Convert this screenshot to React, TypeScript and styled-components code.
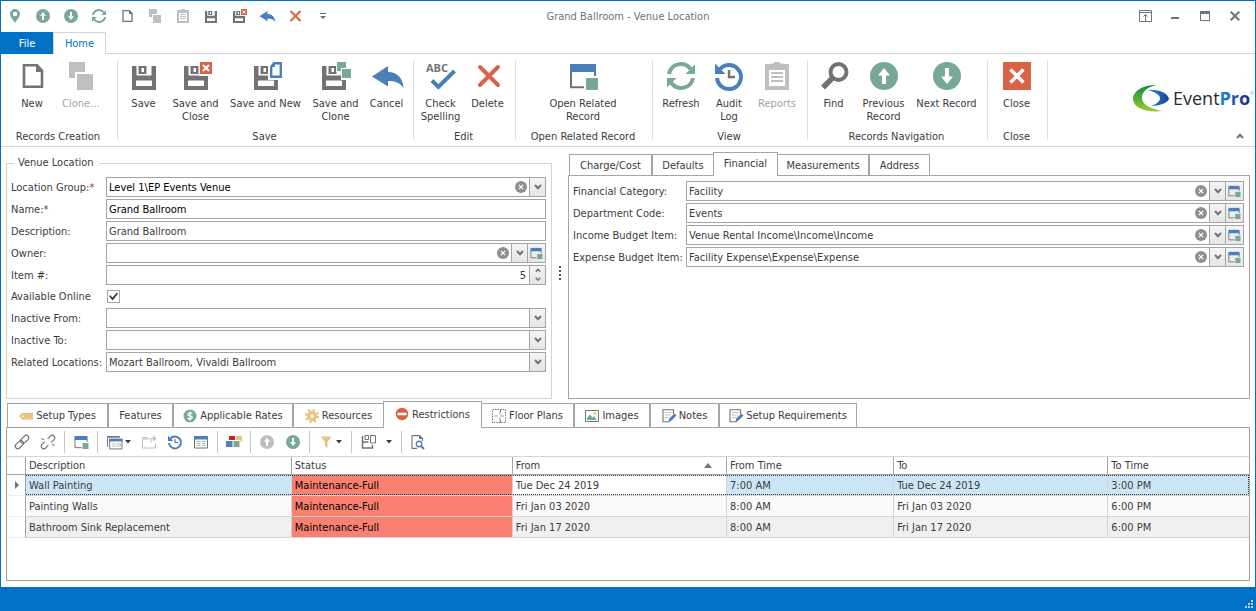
import React, { useRef, useState } from "react";
import styled, { createGlobalStyle, css } from "styled-components";

const c = {
  accent: "#0072c6",
  text: "#3c3c3c",
  grey: "#737373",
  light: "#bfbfbf",
  green: "#78a896",
  blue: "#4a80ba",
  red: "#d96344",
  sand: "#eac282",
  edge: "#a5a5a5",
  line: "#d4d4d4",
};

const GlobalStyle = createGlobalStyle`
  * { box-sizing: border-box; }
  body { margin: 0; background: #fff; }
  body, button, input, select {
    font-family: Tahoma, "DejaVu Sans Condensed", "DejaVu Sans", sans-serif;
    font-size: 11px;
    line-height: 13px;
    color: ${c.text};
  }
  button { background: none; border: 0; padding: 0; margin: 0; }
  svg { display: block; overflow: visible; flex: none; }
`;

/* ---------- icons, drawn on a 28 unit grid ---------- */

type IconProps = { size?: number; children?: React.ReactNode };
const Icon = ({ size = 28, children }: IconProps) => (
  <svg width={size} height={size} viewBox="0 0 28 28" fill="none" aria-hidden="true">
    {children}
  </svg>
);

const Floppy = ({ x = 2 }: { x?: number }) => (
  <g transform={`translate(${x} 0)`} fill={c.grey} fillRule="evenodd">
    <path d="M0 4h4.500v9.500h15V4H24v24H0zM4 18.500v5.500h16v-5.500z" />
    <path d="M6.500 4h8v8h-8zM9.500 6v4h2.500V6z" />
  </g>
);

const Page = () => (
  <g>
    <path d="M6 3.300h13l5 5.500v16H6z" stroke={c.grey} strokeWidth="2.600" />
    <path d="M18 2l7.300 8H18z" fill={c.grey} />
  </g>
);
const Clone = () => (
  <g fill={c.light}>
    <path d="M2 0h16v10H8v6H2z" />
    <path d="M10 12h16v16H10z" />
  </g>
);
const SaveClose = () => (
  <g>
    <Floppy />
    <path d="M17 -1h14v15H17z" fill="#fff" />
    <path d="M18 0h12v12H18z" fill={c.red} />
    <path d="M21 3l6 6M27 3l-6 6" stroke="#fff" strokeWidth="2" />
  </g>
);
const SaveNew = () => (
  <g>
    <Floppy />
    <path d="M16 -1h15v19H16z" fill="#fff" />
    <path d="M22 1.200h6.800v13.600h-9.600V5z" stroke={c.blue} strokeWidth="2.400" />
    <path d="M18 5l5-5v5z" fill={c.blue} />
  </g>
);
const SaveClone = () => (
  <g>
    <Floppy x={0} />
    <path d="M14 -1h11v7h5v12H19v-8h-5z" fill="#fff" />
    <path d="M15 0h9v6h-5v3h-4zM20 7h9v9h-9z" fill={c.green} />
  </g>
);
const Undo = () => (
  <path d="M-1 14.500L15 4v6c9 0 15 6 15.500 16C26.500 20.500 22 19 15 19v5.500z" fill={c.blue} />
);
const Check = () => (
  <g>
    <text x="-1" y="10" fontSize="11" fontWeight="700" fill={c.grey} fontFamily="Open Sans, sans-serif">
      ABC
    </text>
    <path d="M5 18.500l6.300 6.500L27.500 9" stroke={c.blue} strokeWidth="4" />
  </g>
);
const Cross = () => <path d="M6 5l18 18M24 5L6 23" stroke={c.red} strokeWidth="4" strokeLinecap="round" />;
const Related = () => (
  <g>
    <path d="M2 8v17.300h13M26 8v6" stroke={c.grey} strokeWidth="2" />
    <path d="M1 2h26v8H1z" fill={c.blue} />
    <path d="M17 16h12v12H17z" fill={c.green} />
  </g>
);
const Refresh = () => (
  <g>
    <path d="M2 12A12 12 0 0 1 23.500 7M26 16A12 12 0 0 1 4.500 21" stroke={c.green} strokeWidth="4" />
    <path d="M28 2.500V12h-9.500zM0 25.500V16h9.500z" fill={c.green} />
  </g>
);
const History = () => (
  <g>
    <path d="M5 7A12 12 0 1 1 2 16" stroke={c.blue} strokeWidth="4" />
    <path d="M0 1.500V12h10.500z" fill={c.blue} />
    <path d="M14 8v7h6" stroke={c.grey} strokeWidth="2.400" />
  </g>
);
const Clipboard = () => (
  <g>
    <path d="M2 2h6v4h12V2h6v26H2zM6 8v16h16V8z" fill={c.light} fillRule="evenodd" />
    <path d="M8 1.500h3V0h6v1.500h3V6H8z" fill={c.light} />
    <path d="M8 11h12M8 15h12M8 19h12" stroke={c.light} strokeWidth="2" />
  </g>
);
const Find = () => (
  <g stroke={c.grey}>
    <circle cx="18.500" cy="10" r="8" strokeWidth="4" />
    <path d="M12 16.500L3 25.500" strokeWidth="5.500" />
  </g>
);
const Arrow = ({ down, off }: { down?: boolean; off?: boolean }) => (
  <g transform={down ? "rotate(180 14 14)" : undefined}>
    <circle cx="14" cy="14" r="14" fill={off ? c.light : c.green} />
    <path d="M14 6l6 7.500h-4V22h-4v-8.500H8z" fill="#fff" />
  </g>
);
const CloseBox = () => (
  <g>
    <path d="M0 0h28v28H0z" fill={c.red} />
    <path d="M7.500 7.500l13 13M20.500 7.500l-13 13" stroke="#fff" strokeWidth="3.600" />
  </g>
);
const Pin = () => (
  <path
    d="M14 0a10 10 0 0 1 10 10c0 6-6 11-10 18C10 21 4 16 4 10A10 10 0 0 1 14 0zM14 5.500a4.500 4.500 0 1 0 0 9 4.500 4.500 0 0 0 0-9z"
    fill={c.green}
    fillRule="evenodd"
  />
);
const LinkIcon = ({ broken }: { broken?: boolean }) => (
  <g stroke={c.grey} strokeWidth="2.200" transform="rotate(-45 14 14)">
    {broken ? (
      <g>
        <path d="M10 9H2a5 5 0 0 0 0 10h8M18 9h8a5 5 0 0 1 0 10h-8" />
        <path d="M12 5L9 0M19 28l-3-5" />
      </g>
    ) : (
      <g>
        <rect x="-3" y="9" width="19" height="10" rx="5" />
        <rect x="12" y="9" width="19" height="10" rx="5" />
      </g>
    )}
  </g>
);
const Windows = () => (
  <g>
    <path d="M1 22V3h22" stroke={c.grey} strokeWidth="1.800" />
    <path d="M1 2h23v3H1z" fill={c.grey} />
    <path d="M5 8h23v18H5z" fill="#fff" stroke={c.grey} strokeWidth="1.800" />
    <path d="M4 7h25v5H4z" fill={c.blue} />
    <path d="M9 17h8M9 21h8M20 16h5v5h-5z" stroke={c.light} strokeWidth="1.800" />
  </g>
);
const Export = () => (
  <g stroke={c.light} strokeWidth="2">
    <path d="M1 8h14M27 17v9H1V5h9l2 3" />
    <path d="M18 15V7h7" />
    <path d="M22 1l7 6-7 6z" fill={c.light} stroke="none" />
  </g>
);
const FormIcon = () => (
  <g>
    <path d="M1 4h26v22H1z" stroke={c.grey} strokeWidth="2" />
    <path d="M0 2h28v7H0z" fill={c.blue} />
    <path d="M5 13h8M5 17h8M5 21h8M16 13h7M16 17h7M16 21h7" stroke={c.grey} strokeWidth="1.200" />
  </g>
);
const Squares = () => (
  <g>
    <path d="M4 2h12v8H4z" fill="#c9211e" />
    <path d="M18 2h12v12h-3v-4h-9z" fill={c.sand} />
    <path d="M-2 12h13v12H-2z" fill={c.blue} />
    <path d="M13 12h12v12H13z" fill={c.green} />
  </g>
);
const Funnel = () => <path d="M3 3h22L17 14v12l-5-4v-8z" fill={c.sand} />;
const SaveAs = () => (
  <g>
    <path d="M1 2v24h20v-6M1 14h12" stroke={c.grey} strokeWidth="3" />
    <path d="M6 1h7v8H6z" stroke={c.grey} strokeWidth="2" />
    <path d="M17 1h10v15H17z" stroke={c.grey} strokeWidth="2" />
  </g>
);
const Preview = () => (
  <g>
    <path d="M12 26.800H2V1.200h15l6 6V12" stroke={c.grey} strokeWidth="2.200" />
    <path d="M16 0l8 8h-8z" fill={c.grey} />
    <circle cx="16" cy="18" r="5.500" stroke={c.blue} strokeWidth="2.600" />
    <path d="M20 22l6 6" stroke={c.blue} strokeWidth="4" />
  </g>
);
const Tag = () => (
  <path d="M0 14l6-6h22v13H6zM6 13v3h3v-3z" fill={c.sand} fillRule="evenodd" />
);
const Dollar = () => (
  <g>
    <circle cx="14" cy="14" r="13" fill={c.green} />
    <path d="M18.500 9.500c-2-2.500-9-2-9 1.300 0 4 9 2 9 6.200 0 3.500-7.500 3.500-9.300.800M14 4.500v19" stroke="#fff" strokeWidth="2.400" />
  </g>
);
const Gear = () => (
  <g>
    <circle cx="14" cy="14" r="7" stroke={c.sand} strokeWidth="6.500" />
    <circle cx="14" cy="14" r="12" stroke={c.sand} strokeWidth="4.500" strokeDasharray="4.700 4.725" />
  </g>
);
const NoEntry = () => (
  <g>
    <circle cx="14" cy="14" r="12.500" fill={c.red} />
    <path d="M5 11.500h18v5H5z" fill="#fff" />
  </g>
);
const Plan = () => (
  <g stroke={c.grey} strokeWidth="2">
    <rect x="1" y="1" width="26" height="26" strokeDasharray="3 2.200" />
    <path d="M16 5v6M16 17v7M5 14h7M16 14h8" stroke={c.light} strokeWidth="3" />
    <path d="M17 1v5M17 22v5" />
  </g>
);
const Picture = () => (
  <g>
    <path d="M1 3h26v22H1z" stroke={c.grey} strokeWidth="2" />
    <path d="M4 22v-4l6-7 5 6 3-3 6 8z" fill={c.green} />
    <circle cx="20" cy="9" r="2.800" fill={c.sand} />
  </g>
);
const Note = () => (
  <g>
    <path d="M23 10V1.500H2v24h14" stroke={c.grey} strokeWidth="2.200" />
    <path d="M6 7h13M6 12h11M6 17h7" stroke={c.light} strokeWidth="2" />
    <path d="M13 25l1.500-6L25 9l4 4-10.500 10.500z" fill={c.blue} />
  </g>
);
const ClearMark = () => (
  <Icon size={12}>
    <circle cx="14" cy="14" r="14" fill="#8f8f8f" />
    <path d="M9 9l10 10M19 9L9 19" stroke="#fff" strokeWidth="3" />
  </Icon>
);
const Chevron = ({ up, w = 8 }: { up?: boolean; w?: number }) => (
  <svg width={w} height={w * 0.75} viewBox="0 0 8 6" fill="none" aria-hidden="true">
    <path d={up ? "M1 5l3-3.200L7 5" : "M1 1l3 3.200L7 1"} stroke={c.grey} strokeWidth="2" />
  </svg>
);
const Caret = () => (
  <svg width="6" height="4" viewBox="0 0 6 4" aria-hidden="true">
    <path d="M0 0h6L3 3.500z" fill="#3c3c3c" />
  </svg>
);

/* ---------- window frame ---------- */

const Shell = styled.div`
  display: flex;
  flex-direction: column;
  min-height: 100vh;
  border: solid ${c.accent};
  border-width: 1px 1px 0;
`;

const TitleBar = styled.header`
  display: grid;
  grid-template-columns: 1fr auto 1fr;
  align-items: center;
  height: 31px;
  padding-bottom: 1px;
`;
const QuickBar = styled.div`
  display: flex;
`;
const QuickButton = styled.button`
  display: flex;
  align-items: center;
  justify-content: center;
  width: 28px;
  height: 28px;
`;
const Title = styled.h1`
  margin: 0;
  font-size: 11px;
  font-weight: 400;
  color: ${c.grey};
`;
const WindowButtons = styled.div`
  display: flex;
  justify-content: flex-end;
  padding-right: 5px;
`;
const WindowButton = styled(QuickButton)`
  width: 30px;
`;

/* ---------- ribbon ---------- */

const RibbonTabs = styled.nav`
  display: flex;
  height: 22px;
  border-bottom: 1px solid ${c.line};
`;
const RibbonTab = styled.button<{ $file?: boolean }>`
  width: 52px;
  height: 22px;
  color: ${c.accent};
  ${(p) =>
    p.$file
      ? css`
          background: ${c.accent};
          color: #fff;
        `
      : css`
          width: 53px;
          background: #fff;
          border: 1px solid ${c.line};
          border-bottom: 0;
        `}
`;
const Ribbon = styled.div`
  display: flex;
  border-bottom: 1px solid ${c.line};
  padding: 6px 0;
`;
const RibbonGroup = styled.section<{ $w: number }>`
  display: flex;
  flex: none;
  flex-direction: column;
  justify-content: space-between;
  width: ${(p) => p.$w}px;
  height: 80px;
  padding: 0 4px 0 2px;
  border-right: 1px solid #dcdcdc;
`;
const RibbonItems = styled.div`
  display: flex;
  justify-content: center;
`;
const RibbonButton = styled.button<{ $w: number }>`
  display: flex;
  flex: none;
  flex-direction: column;
  align-items: center;
  gap: 7px;
  width: ${(p) => p.$w}px;
  padding-top: 2px;
  white-space: pre-line;
  &:disabled {
    color: #a6a6a6;
  }
`;
const GroupName = styled.h2`
  margin: 0 -4px -4px;
  font-size: 11px;
  line-height: 14px;
  font-weight: 400;
  text-align: center;
  white-space: nowrap;
`;
const RibbonEnd = styled.div`
  display: flex;
  flex: 1;
  flex-direction: column;
  align-items: flex-end;
  justify-content: space-between;
  padding: 25px 2px 0 0;
`;
const Collapse = styled.button`
  padding: 0 9px 1px;
`;

type Action = [label: string, width: number, icon: React.ReactNode, off?: boolean];
const ribbon: { name: string; w: number; items: Action[] }[] = [
  { name: "Records Creation", w: 117, items: [["New", 46, <Page />], ["Clone…", 52, <Clone />, true]] },
  {
    name: "Save",
    w: 296,
    items: [
      ["Save", 44, <Floppy />],
      ["Save and\nClose", 60, <SaveClose />],
      ["Save and New", 80, <SaveNew />],
      ["Save and\nClone", 60, <SaveClone />],
      ["Cancel", 42, <Undo />],
    ],
  },
  { name: "Edit", w: 102, items: [["Check\nSpelling", 48, <Check />], ["Delete", 46, <Cross />]] },
  { name: "Open Related Record", w: 137, items: [["Open Related\nRecord", 130, <Related />]] },
  {
    name: "View",
    w: 155,
    items: [["Refresh", 48, <Refresh />], ["Audit\nLog", 48, <History />], ["Reports", 48, <Clipboard />, true]],
  },
  {
    name: "Records Navigation",
    w: 180,
    items: [["Find", 42, <Find />], ["Previous\nRecord", 58, <Arrow />], ["Next Record", 68, <Arrow down />]],
  },
  { name: "Close", w: 60, items: [["Close", 44, <CloseBox />]] },
];

const quick: [string, React.ReactNode][] = [
  ["Locate", <Pin />],
  ["Previous", <Arrow />],
  ["Next", <Arrow down />],
  ["Refresh", <Refresh />],
  ["New", <Page />],
  ["Clone", <Clone />],
  ["Reports", <Clipboard />],
  ["Save", <Floppy />],
  ["Save and close", <SaveClose />],
  ["Cancel", <Undo />],
  ["Delete", <Cross />],
];

const Logo = () => (
  <svg width="120" height="28" viewBox="0 0 120 28" role="img" aria-label="EventPro">
    <defs>
      <linearGradient id="leaf" x1="0" y1="0" x2="0" y2="1">
        <stop offset="0" stopColor="#0f8f45" />
        <stop offset="1" stopColor="#9ccb2b" />
      </linearGradient>
      <linearGradient id="swoosh" x1="0" y1="0" x2="1" y2="0">
        <stop offset="0" stopColor="#1d8fdc" />
        <stop offset="1" stopColor="#1f3f94" />
      </linearGradient>
      <linearGradient id="pro" gradientUnits="userSpaceOnUse" x1="87" y1="0" x2="117" y2="0">
        <stop offset="0" stopColor="#1b86d6" />
        <stop offset="1" stopColor="#252a80" />
      </linearGradient>
    </defs>
    <path d="M23 0C10 0 0 6 0 14s11 14 30 12C18 24 9 20 9 13 9 7 14 2 23 0z" fill="url(#leaf)" />
    <path d="M15 5c10-1 20 3 21 9-2 4-9 7-18 7 5-2 9-4 9-8 0-3-5-6-12-8z" fill="url(#swoosh)" />
    <g fontFamily="Open Sans, sans-serif" fontSize="18">
      <text x="40" y="20" fill="#2b2b2b">
        Event
        <tspan fontWeight="700" fill="url(#pro)">Pro</tspan>
      </text>
    </g>
    <circle cx="119" cy="8" r="1.300" fill="none" stroke="#7aa7d8" strokeWidth=".6" />
  </svg>
);

/* ---------- form fields ---------- */

const Body = styled.main`
  display: flex;
  flex: 1;
  flex-direction: column;
  padding: 5px 5px 6px;
`;
const Split = styled.div`
  display: grid;
  grid-template-columns: 546fr 16px 682fr;
`;
const LocationBox = styled.fieldset`
  display: block;
  min-width: 0;
  margin: 4px 0 0;
  padding: 7px 5px 26px 4px;
  border: 1px solid ${c.line};
`;
const Legend = styled.legend`
  margin-left: 3px;
  padding: 0 5px 0 4px;
  line-height: 14px;
`;
const Fields = styled.div`
  display: grid;
  gap: 2px;
`;
const Row = styled.div<{ $label: number; $short?: boolean }>`
  display: grid;
  grid-template-columns: ${(p) => p.$label}px 1fr;
  align-items: center;
  height: ${(p) => (p.$short ? 19 : 20)}px;
`;
const Label = styled.label`
  white-space: nowrap;
`;
const Required = styled.span`
  color: ${(p) => p.color};
`;
const Frame = styled.div`
  display: flex;
  height: 20px;
  border: 1px solid ${c.edge};
  background: #fff;
`;
const entry = css<{ $strong?: boolean; $right?: boolean }>`
  flex: 1;
  min-width: 0;
  margin: 0;
  padding: 0 3px 0 2px;
  border: 0;
  outline: 0;
  background: transparent;
  color: ${(p) => (p.$strong ? "#000" : c.text)};
  text-align: ${(p) => (p.$right ? "right" : "left")};
`;
const TextInput = styled.input<{ $strong?: boolean; $right?: boolean }>`
  ${entry}
`;
const Select = styled.select<{ $strong?: boolean; $right?: boolean }>`
  ${entry}
  appearance: none;
`;
const ClearButton = styled.button`
  display: flex;
  align-items: center;
  justify-content: center;
  width: 16px;
`;
const CellButton = styled.button<{ $related?: boolean }>`
  display: flex;
  flex: none;
  align-items: center;
  justify-content: center;
  width: ${(p) => (p.$related ? 18 : 16)}px;
  padding-right: ${(p) => (p.$related ? 2 : 0)}px;
  border-left: 1px solid ${c.edge};
  background: linear-gradient(#f4f4f4, #e6e6e6);
`;
const Spinner = styled.div`
  display: flex;
  flex: none;
  flex-direction: column;
  width: 16px;
  border-left: 1px solid ${c.edge};
  background: linear-gradient(#f4f4f4, #e6e6e6);
`;
const SpinButton = styled.button`
  display: flex;
  flex: 1;
  align-items: center;
  justify-content: center;
`;
const CheckBox = styled.input`
  display: grid;
  place-items: center;
  width: 13px;
  height: 13px;
  margin: 0 0 0 1px;
  appearance: none;
  border: 1px solid ${c.edge};
  background: #fff;
  &:checked::before {
    content: "";
    width: 9px;
    height: 9px;
    background: #3c3c3c;
    clip-path: polygon(0 45%, 15% 35%, 38% 60%, 88% 5%, 100% 20%, 40% 95%);
  }
`;

type FieldProps = {
  id: string;
  label: string;
  value?: string;
  kind?: "text" | "combo" | "date" | "number";
  clear?: boolean;
  related?: boolean;
  strong?: boolean;
  star?: string;
  labelWidth?: number;
};

function Field({ id, label, value = "", kind = "text", clear, related, strong, star, labelWidth = 95 }: FieldProps) {
  const [current, setCurrent] = useState(value);
  const select = useRef<HTMLSelectElement>(null);
  const change = (e: React.ChangeEvent<HTMLInputElement | HTMLSelectElement>) => setCurrent(e.target.value);
  const step = (n: number) => setCurrent(String(Number(current) + n));
  return (
    <Row $label={labelWidth}>
      <Label htmlFor={id}>
        {label}
        {star && <Required color={star}>*</Required>}
      </Label>
      <Frame>
        {kind === "combo" ? (
          <Select id={id} ref={select} value={current} onChange={change} $strong={strong}>
            <option value="" />
            {value && <option value={value}>{value}</option>}
          </Select>
        ) : (
          <TextInput id={id} value={current} onChange={change} $strong={strong} $right={kind === "number"} />
        )}
        {clear && (
          <ClearButton aria-label={`Clear ${label}`} onClick={() => setCurrent("")}>
            <ClearMark />
          </ClearButton>
        )}
        {(kind === "combo" || kind === "date") && (
          <CellButton aria-label={`Open ${label}`} onClick={() => select.current?.showPicker?.()}>
            <Chevron />
          </CellButton>
        )}
        {related && (
          <CellButton $related aria-label={`Open record for ${label}`}>
            <Icon size={12}>
              <Related />
            </Icon>
          </CellButton>
        )}
        {kind === "number" && (
          <Spinner>
            <SpinButton aria-label="Increase" onClick={() => step(1)}>
              <Chevron up w={6} />
            </SpinButton>
            <SpinButton aria-label="Decrease" onClick={() => step(-1)}>
              <Chevron w={6} />
            </SpinButton>
          </Spinner>
        )}
      </Frame>
    </Row>
  );
}

const Splitter = styled.div`
  display: flex;
  flex-direction: column;
  align-items: center;
  justify-content: center;
  gap: 2px;
  padding-bottom: 5px;
`;
const Dot = styled.i`
  width: 2px;
  height: 2px;
  background: #555;
`;

/* ---------- tabbed panels ---------- */

const TabPage = styled.section<{ $grow?: boolean }>`
  display: flex;
  flex-direction: column;
  flex: ${(p) => (p.$grow ? 1 : "initial")};
  margin-top: ${(p) => (p.$grow ? 2 : 0)}px;
`;
const Tabs = styled.div`
  display: flex;
  align-items: flex-end;
  padding-left: 1px;
`;
const Tab = styled.button<{ $w: number; $h: number; $active?: boolean }>`
  display: flex;
  flex: none;
  align-items: center;
  justify-content: center;
  gap: 3px;
  width: ${(p) => p.$w}px;
  height: ${(p) => p.$h}px;
  border: 1px solid ${c.edge};
  border-bottom: 0;
  background: #fff;
  white-space: nowrap;
  ${(p) =>
    p.$active &&
    css`
      z-index: 1;
      height: ${p.$h + 3}px;
      margin: 0 -1px -1px;
      padding-bottom: 2px;
    `}
`;
const Panel = styled.div<{ $form?: boolean }>`
  flex: 1;
  padding: ${(p) => (p.$form ? "5px 5px 5px 4px" : "0")};
  border: 1px solid ${c.edge};
`;

/* ---------- grid ---------- */

const Toolbar = styled.div`
  display: flex;
  align-items: center;
  height: 28px;
  padding-left: 2px;
`;
const Tool = styled.button<{ $w?: number; $gap?: number }>`
  display: flex;
  align-items: center;
  justify-content: center;
  gap: ${(p) => p.$gap ?? 3}px;
  width: ${(p) => p.$w ?? 26}px;
  height: 26px;
`;
const Bar = styled.i`
  width: 1px;
  height: 22px;
  margin: 0 3px;
  background: #c6c6c6;
`;

const Grid = styled.table`
  width: 100%;
  table-layout: fixed;
  border-spacing: 0;
  border-top: 1px solid ${c.line};
`;
const Col = styled.col<{ $w?: string }>`
  width: ${(p) => p.$w ?? "auto"};
`;
const Head = styled.th`
  height: 18px;
  padding: 0 3px;
  border-right: 1px solid ${c.edge};
  border-bottom: 1px solid ${c.edge};
  font-weight: 400;
  text-align: left;
  &:last-child {
    border-right: 0;
  }
`;
const Sorted = styled.div`
  display: flex;
  align-items: center;
  justify-content: space-between;
  padding-right: 11px;
`;
const Cell = styled.td`
  height: 21px;
  padding: 0 3px;
  border-right: 1px solid ${c.line};
  border-bottom: 1px solid ${c.line};
  &:last-child {
    border-right: 0;
  }
`;
const Marker = styled(Cell)`
  padding: 0 0 0 8px;
  border-right-color: ${c.edge};
  border-bottom-color: #eee;
  background: #fff;
`;
const Status = styled(Cell)`
  background-color: #fa8072;
  color: #000;
`;
const dots = "repeating-linear-gradient(90deg, #333 0 1px, transparent 1px 2px)";
const Line = styled.tr<{ $bg: string; $selected?: boolean }>`
  background: ${(p) => p.$bg};
  ${(p) =>
    p.$selected &&
    css`
      ${Cell}:not(${Marker}) {
        background-image: ${dots}, ${dots};
        background-size: 100% 1px;
        background-position: left top, left bottom;
        background-repeat: no-repeat;
        background-clip: padding-box;
      }
      ${Cell}:nth-child(4) {
        background-color: #fff;
      }
      ${Cell}:last-child {
        border-right: 1px dotted #333;
      }
    `}
`;

const rows = [
  ["Wall Painting", "Maintenance-Full", "Tue Dec 24 2019", "7:00 AM", "Tue Dec 24 2019", "3:00 PM"],
  ["Painting Walls", "Maintenance-Full", "Fri Jan 03 2020", "8:00 AM", "Fri Jan 03 2020", "6:00 PM"],
  ["Bathroom Sink Replacement", "Maintenance-Full", "Fri Jan 17 2020", "8:00 AM", "Fri Jan 17 2020", "6:00 PM"],
];
const shades = ["#cde6f7", "#fafafa", "#f0f0f0"];

const StatusBar = styled.footer`
  display: flex;
  align-items: flex-end;
  justify-content: flex-end;
  height: 24px;
  padding: 3px 2px;
  background: ${c.accent};
`;

const topTabs: [string, number][] = [
  ["Charge/Cost", 83],
  ["Defaults", 62],
  ["Financial", 65],
  ["Measurements", 92],
  ["Address", 61],
];
const lowerTabs: [string, number, React.ReactNode?][] = [
  ["Setup Types", 101, <Tag />],
  ["Features", 65],
  ["Applicable Rates", 120, <Dollar />],
  ["Resources", 91, <Gear />],
  ["Restrictions", 99, <NoEntry />],
  ["Floor Plans", 93, <Plan />],
  ["Images", 76, <Picture />],
  ["Notes", 69, <Note />],
  ["Setup Requirements", 138, <Note />],
];

const ToolIcon = ({ name, children, size = 14 }: { name: string; children: React.ReactNode; size?: number }) => (
  <Tool aria-label={name}>
    <Icon size={size}>{children}</Icon>
  </Tool>
);

export default function App() {
  const [top, setTop] = useState("Financial");
  const [lower, setLower] = useState("Restrictions");
  const [online, setOnline] = useState(true);

  return (
    <Shell>
      <GlobalStyle />
      <TitleBar>
        <QuickBar>
          {quick.map(([name, icon]) => (
            <QuickButton key={name} aria-label={name}>
              <Icon size={14}>{icon}</Icon>
            </QuickButton>
          ))}
          <QuickButton aria-label="Customize toolbar">
            <svg width="6" height="7" viewBox="0 0 6 7">
              <path d="M0 0h6v1H0zM0 3h6L3 6z" fill={c.grey} />
            </svg>
          </QuickButton>
        </QuickBar>
        <Title>Grand Ballroom - Venue Location</Title>
        <WindowButtons>
          <WindowButton aria-label="Ribbon display options">
            <svg width="13" height="12" viewBox="0 0 13 12" fill="none" stroke={c.grey}>
              <path d="M.5.500h12v11H.5zM.5 2.500h12M6.500 11V4.500M4.500 6.500l2-2 2 2" />
            </svg>
          </WindowButton>
          <WindowButton aria-label="Minimize">
            <svg width="8" height="10" viewBox="0 0 8 10">
              <path d="M0 6h8v2H0z" fill={c.grey} />
            </svg>
          </WindowButton>
          <WindowButton aria-label="Maximize">
            <svg width="10" height="10" viewBox="0 0 10 10">
              <path d="M0 0h10v10H0zM1 3v6h8V3z" fill={c.grey} fillRule="evenodd" />
            </svg>
          </WindowButton>
          <WindowButton aria-label="Close window">
            <svg width="10" height="10" viewBox="0 0 10 10">
              <path d="M.7.700l8.600 8.600M9.300.700L.7 9.300" stroke={c.grey} strokeWidth="2" />
            </svg>
          </WindowButton>
        </WindowButtons>
      </TitleBar>

      <RibbonTabs>
        <RibbonTab $file>File</RibbonTab>
        <RibbonTab>Home</RibbonTab>
      </RibbonTabs>
      <Ribbon>
        {ribbon.map((g) => (
          <RibbonGroup key={g.name} $w={g.w}>
            <RibbonItems>
              {g.items.map(([label, w, icon, off]) => (
                <RibbonButton key={label} $w={w} disabled={off}>
                  <Icon>{icon}</Icon>
                  {label}
                </RibbonButton>
              ))}
            </RibbonItems>
            <GroupName>{g.name}</GroupName>
          </RibbonGroup>
        ))}
        <RibbonEnd>
          <Logo />
          <Collapse aria-label="Collapse ribbon">
            <Chevron up />
          </Collapse>
        </RibbonEnd>
      </Ribbon>

      <Body>
        <Split>
          <LocationBox>
            <Legend>Venue Location</Legend>
            <Fields>
              <Field id="group" label="Location Group:" star="#a33a1c" value={"Level 1\\EP Events Venue"} kind="combo" clear strong />
              <Field id="name" label="Name:" star="#2a4f8f" value="Grand Ballroom" strong />
              <Field id="description" label="Description:" value="Grand Ballroom" />
              <Field id="owner" label="Owner:" kind="combo" clear related />
              <Field id="item" label="Item #:" value="5" kind="number" />
              <Row $label={95} $short>
                <Label htmlFor="online">Available Online</Label>
                <CheckBox id="online" type="checkbox" checked={online} onChange={(e) => setOnline(e.target.checked)} />
              </Row>
              <Field id="from" label="Inactive From:" kind="date" />
              <Field id="to" label="Inactive To:" kind="date" />
              <Field id="relatedLocations" label="Related Locations:" value="Mozart Ballroom, Vivaldi Ballroom" kind="combo" />
            </Fields>
          </LocationBox>
          <Splitter>
            <Dot />
            <Dot />
            <Dot />
            <Dot />
          </Splitter>
          <TabPage>
            <Tabs role="tablist">
              {topTabs.map(([name, w]) => (
                <Tab key={name} role="tab" aria-selected={top === name} $w={w} $h={21} $active={top === name} onClick={() => setTop(name)}>
                  {name}
                </Tab>
              ))}
            </Tabs>
            <Panel $form>
              <Fields>
                <Field id="category" label="Financial Category:" value="Facility" kind="combo" clear related labelWidth={113} />
                <Field id="department" label="Department Code:" value="Events" kind="combo" clear related labelWidth={113} />
                <Field id="income" label="Income Budget Item:" value={"Venue Rental Income\\Income\\Income"} kind="combo" clear related labelWidth={113} />
                <Field id="expense" label="Expense Budget Item:" value={"Facility Expense\\Expense\\Expense"} kind="combo" clear related labelWidth={113} />
              </Fields>
            </Panel>
          </TabPage>
        </Split>

        <TabPage $grow>
          <Tabs role="tablist">
            {lowerTabs.map(([name, w, icon]) => (
              <Tab key={name} role="tab" aria-selected={lower === name} $w={w} $h={24} $active={lower === name} onClick={() => setLower(name)}>
                {icon && <Icon size={14}>{icon}</Icon>}
                {name}
              </Tab>
            ))}
          </Tabs>
          <Panel>
            <Toolbar role="toolbar">
              <ToolIcon name="Link"><LinkIcon /></ToolIcon>
              <ToolIcon name="Unlink"><LinkIcon broken /></ToolIcon>
              <Bar />
              <ToolIcon name="Open related"><Related /></ToolIcon>
              <Bar />
              <Tool $w={35} aria-label="Views">
                <Icon size={15}><Windows /></Icon>
                <Caret />
              </Tool>
              <ToolIcon name="Export"><Export /></ToolIcon>
              <ToolIcon name="Audit log"><History /></ToolIcon>
              <ToolIcon name="Edit form"><FormIcon /></ToolIcon>
              <Bar />
              <ToolIcon name="Conditional colors"><Squares /></ToolIcon>
              <Bar />
              <ToolIcon name="Previous"><Arrow off /></ToolIcon>
              <ToolIcon name="Next"><Arrow down /></ToolIcon>
              <Bar />
              <Tool $w={35} aria-label="Filter">
                <Icon size={14}><Funnel /></Icon>
                <Caret />
              </Tool>
              <Bar />
              <Tool $w={43} $gap={10} aria-label="Save layout">
                <Icon size={14}><SaveAs /></Icon>
                <Caret />
              </Tool>
              <Bar />
              <ToolIcon name="Preview"><Preview /></ToolIcon>
            </Toolbar>
            <Grid>
              <colgroup>
                <Col $w="19px" />
                <Col $w="21.4%" />
                <Col $w="17.8%" />
                <Col $w="17.25%" />
                <Col $w="13.45%" />
                <Col $w="17.25%" />
                <Col />
              </colgroup>
              <thead>
                <tr>
                  <Head />
                  <Head>Description</Head>
                  <Head>Status</Head>
                  <Head aria-sort="ascending">
                    <Sorted>
                      From
                      <svg width="8" height="5" viewBox="0 0 8 5" aria-hidden="true">
                        <path d="M4 0l4 5H0z" fill={c.grey} />
                      </svg>
                    </Sorted>
                  </Head>
                  <Head>From Time</Head>
                  <Head>To</Head>
                  <Head>To Time</Head>
                </tr>
              </thead>
              <tbody>
                {rows.map(([description, status, ...rest], i) => (
                  <Line key={description} $bg={shades[i]} $selected={i === 0}>
                    <Marker>
                      {i === 0 && (
                        <svg width="4" height="8" viewBox="0 0 4 8" aria-hidden="true">
                          <path d="M0 0l4 4-4 4z" fill={c.grey} />
                        </svg>
                      )}
                    </Marker>
                    <Cell>{description}</Cell>
                    <Status>{status}</Status>
                    {rest.map((v, n) => (
                      <Cell key={n}>{v}</Cell>
                    ))}
                  </Line>
                ))}
              </tbody>
            </Grid>
          </Panel>
        </TabPage>
      </Body>

      <StatusBar>
        <svg width="8" height="8" viewBox="0 0 8 8" fill="#b9cfe4" aria-hidden="true">
          <path d="M6 0h2v2H6zM3 3h2v2H3zM6 3h2v2H6zM0 6h2v2H0zM3 6h2v2H3zM6 6h2v2H6z" />
        </svg>
      </StatusBar>
    </Shell>
  );
}
